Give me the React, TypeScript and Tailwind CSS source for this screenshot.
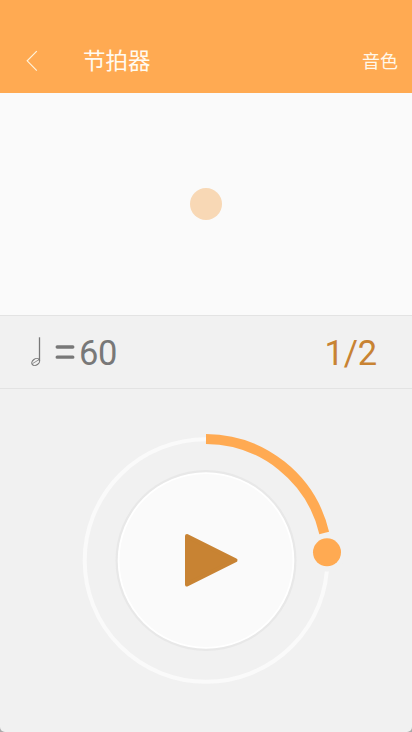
const CX = 206;
const CY = 171.5;

function BackIcon() {
  return (
    <svg width="12" height="22" viewBox="0 0 12 22" fill="none" className="block">
      <path d="M10.8 1.2 1.2 10.8l9.6 9.8" stroke="#fff3dc" strokeWidth="1.2" />
    </svg>
  );
}

function HalfNote() {
  return (
    <svg width="10" height="30" viewBox="0 0 10 30" fill="none" className="block">
      <path d="M8.5 0.3V24" stroke="#787878" strokeWidth="1.3" />
      <ellipse cx="4.7" cy="25" rx="4.2" ry="3.1" transform="rotate(-35 4.7 25)" stroke="#787878" strokeWidth="1.1" />
      <path d="M1.5 26.6 7.8 22.8" stroke="#787878" strokeWidth="0.8" />
    </svg>
  );
}

function EqualsSign() {
  return (
    <svg width="20" height="14" viewBox="0 0 20 14" fill="none" className="block">
      <path d="M2.2 2H17.8M2.2 12.2H17.8" stroke="#787878" strokeWidth="3.3" strokeLinecap="round" />
    </svg>
  );
}

function Dial() {
  return (
    <svg width="412" height="343" viewBox="0 0 412 343" fill="none" className="block">
      <circle cx={CX} cy={CY} r="121.3" stroke="#fafafa" strokeWidth="4" />
      <circle cx="327" cy="163.3" r="19.3" fill="#f1f1f1" />
      <path d="M206 50a122 122 0 0 1 118.2 94" stroke="#ffaa52" strokeWidth="10" />
      <circle cx="327" cy="163.3" r="14" fill="#ffaa52" />
      <circle cx={CX} cy={CY} r="90.5" fill="#e8e8e8" />
      <circle cx={CX} cy={CY} r="88.3" fill="#ffffff" />
      <circle cx={CX} cy={CY} r="86.5" fill="#fafafa" />
      <path
        d="M187 147 235.5 171.3 187 195.5Z"
        fill="#c88333"
        stroke="#c88333"
        strokeWidth="4"
        strokeLinejoin="round"
      />
    </svg>
  );
}

export default function App() {
  return (
    <div className="flex h-[732px] w-[412px] flex-col overflow-hidden bg-[#aaaaaa] font-['Roboto','Noto_Sans_CJK_SC',sans-serif]">
      <div className="flex flex-1 flex-col overflow-hidden rounded-b-[5px] bg-[#f1f1f1]">
        <header className="flex h-[93px] shrink-0 items-end bg-[#ffaa52] pr-[14px] pb-4 pl-[26px] text-[#fffaf0]">
          <button className="mb-[5px]" aria-label="返回">
            <BackIcon />
          </button>
          <h1 className="ml-[45px] text-[22.5px] leading-[32px]">节拍器</h1>
          <button className="-mb-px ml-auto text-[18px] leading-[32px] text-[#fff8ea]">音色</button>
        </header>
        <section className="flex h-[222px] shrink-0 items-center justify-center bg-[#fafafa] pb-px">
          <span className="size-8 rounded-full bg-[#f8d8b5]" />
        </section>
        <section className="flex h-[74px] shrink-0 items-center justify-between border-y border-[#e3e3e3] pr-[35px] pl-[31px] text-[34.5px] leading-none">
          <div className="flex items-center text-[#787878]">
            <HalfNote />
            <div className="ml-[14px]">
              <EqualsSign />
            </div>
            <span className="ml-[4px] pt-[3px] tracking-[-0.3px]">60</span>
          </div>
          <span className="pt-[3px] tracking-[-0.2px] text-[#c88333]">1/2</span>
        </section>
        <section className="flex-1">
          <Dial />
        </section>
      </div>
    </div>
  );
}
